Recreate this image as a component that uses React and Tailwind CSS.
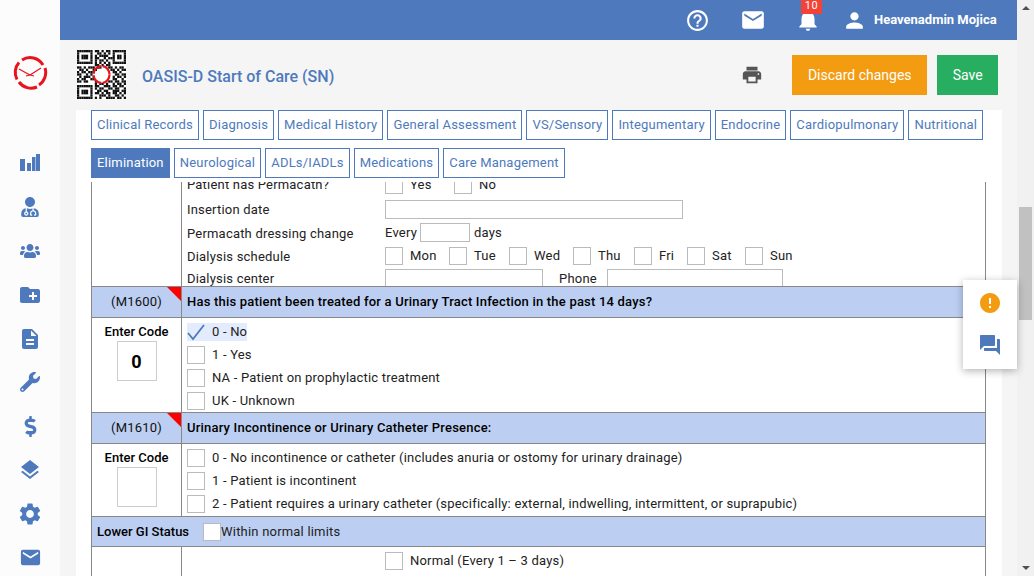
import React from "react";
import { MdHelpOutline, MdEmail, MdNotifications, MdPerson, MdPrint, MdError, MdQuestionAnswer, MdCreateNewFolder, MdDescription, MdLayers, MdSettings } from "react-icons/md";
import { FaUserMd, FaUsers, FaWrench, FaDollarSign } from "react-icons/fa";

const font = { fontFamily: "Roboto, sans-serif" };

function Logo() {
  return (
    <svg width="36" height="36" viewBox="0 0 36 36" fill="none" stroke="#e8141c">
      <path d="M5 24.5A15 15 0 0 1 7 7.5" strokeWidth="3" />
      <path d="M10 5A15 15 0 0 1 31 10" strokeWidth="3" />
      <path d="M33 13A15 15 0 0 1 27 30" strokeWidth="3" />
      <path d="M25 32A15 15 0 0 1 7 27" strokeWidth="3" />
      <path d="M7 14L18 20L29 13M14 21L18 20L22 21" strokeWidth="1.2" />
    </svg>
  );
}

function QR() {
  const rows = [
    "1111111011010110111111",
    "1000001001101010100001",
    "1011101010111100101101",
    "1011101011001011101101",
    "1000001010110100100001",
    "1111111010101010111111",
    "0000000011010110000000",
    "1101011101100011010110",
    "0110100110000001101011",
    "1011011100000000110100",
    "1100101000000000011011",
    "0101110100000000101101",
    "1011001100000000110010",
    "1101100010000011011011",
    "0000000010110100101101",
    "1111111011001110110110",
    "1000001010110011011001",
    "1011101001101100111011",
    "1011101011010110110101",
    "1000001000111010011010",
    "1111111010100111101101",
  ];
  return (
    <svg width="49" height="49" viewBox="0 0 22 21" preserveAspectRatio="none" className="shrink-0 bg-white">
      {rows.map((r, y) =>
        r.split("").map((c, x) => (c === "1" ? <rect key={x + "-" + y} x={x} y={y} width="1" height="1" fill="#111" /> : null))
      )}
      <circle cx="11" cy="10.5" r="3.6" fill="none" stroke="#e8141c" strokeWidth="1" strokeDasharray="5 0.8" />
    </svg>
  );
}

function Box({ className = "" }) {
  return <span className={"inline-block w-[18px] h-[18px] border border-[#bbbbbb] bg-white shrink-0 " + className} />;
}

function Input({ className = "" }) {
  return <span className={"block h-[19px] border border-[#bbbbbb] bg-white shrink-0 " + className} />;
}

function Tab({ children, active }) {
  return (
    <div className={"h-[30px] px-[5px] flex items-center border border-[#4e7abd] text-[13px] tracking-[0.2px] " + (active ? "bg-[#4e7abd] text-white" : "bg-white text-[#4e7abd]")}>
      {children}
    </div>
  );
}

function Day({ label, className }) {
  return (
    <div className={"flex items-center " + className}>
      <Box />
      <span className="ml-[7px]">{label}</span>
    </div>
  );
}

function Option({ label, checked }) {
  return (
    <div className="h-[23px] flex items-center">
      <div className={"flex items-center h-[18px] " + (checked ? "bg-[#e3ecfc]" : "")}>
        {checked ? (
          <svg width="18" height="18" viewBox="0 0 18 18" fill="none" stroke="#4e7abd" strokeWidth="1.8">
            <path d="M1 10L6 16L17 2" />
          </svg>
        ) : (
          <Box />
        )}
        <span className="ml-[7px] whitespace-nowrap pr-0">{label}</span>
      </div>
    </div>
  );
}

function Header({ code, title, children }) {
  return (
    <div className="flex h-[31px] bg-[#bccff2] border-b border-[#888888] text-black">
      <div className="relative w-[90px] shrink-0 border-r border-[#888888] flex items-center justify-center text-[#111]">
        {code}
        <span className="absolute top-0 right-0 w-0 h-0 border-l-[14px] border-l-transparent border-t-[14px] border-t-[#ff0000]" />
      </div>
      <div className="pl-[5px] flex items-center font-medium">{title}</div>
    </div>
  );
}

const navIcons = [
  <svg key="a" width="20" height="17" viewBox="0 0 20 17" fill="#4e7abd"><rect x="0" y="5" width="5" height="12" /><rect x="7" y="9" width="4" height="8" /><rect x="12" y="3" width="3.5" height="14" /><rect x="16" y="0" width="4" height="17" /></svg>,
  <FaUserMd key="b" size={20} />,
  <FaUsers key="c" size={20} />,
  <MdCreateNewFolder key="d" size={24} />,
  <MdDescription key="e" size={24} />,
  <FaWrench key="f" size={20} />,
  <FaDollarSign key="g" size={21} />,
  <MdLayers key="h" size={24} />,
  <MdSettings key="i" size={26} />,
  <MdEmail key="j" size={23} />,
];

export default function App() {
  return (
    <div className="relative flex h-[576px] w-[1034px] overflow-hidden bg-[#f5f5f5] text-[13px] text-[#222]" style={font}>
      {/* sidebar */}
      <aside className="w-[60px] shrink-0 bg-[#fcfcfc] flex flex-col items-center">
        <div className="mt-[55px] h-[36px]"><Logo /></div>
        <nav className="mt-[50px] flex flex-col items-center text-[#4e7abd]">
          {navIcons.map((ic, i) => (
            <div key={i} className="h-[43.9px] w-[30px] flex items-center justify-center">{ic}</div>
          ))}
        </nav>
      </aside>

      {/* main */}
      <div className="flex-1 min-w-0 flex flex-col">
        <header className="h-[40px] shrink-0 bg-[#4e7abd] flex items-center text-white">
          <MdHelpOutline size={25} className="ml-[625px]" />
          <MdEmail size={26} className="ml-[30px]" />
          <div className="relative ml-[29px]">
            <MdNotifications size={26} />
            <span className="absolute -top-[9px] left-[6px] w-[21px] h-[16px] bg-[#f44336] rounded-[1px] text-[11px] flex items-center justify-center tracking-[0.5px]">10</span>
          </div>
          <MdPerson size={25} className="ml-[21px]" />
          <span className="ml-[7px] font-bold text-[13px] whitespace-nowrap">Heavenadmin Mojica</span>
        </header>

        <div className="h-[70px] shrink-0 flex items-start pl-[17px]">
          <div className="mt-[10px]"><QR /></div>
          <div className="ml-[16px] mt-[25px] text-[16px] font-medium text-[#4e7abd] whitespace-nowrap">OASIS-D Start of Care (SN)</div>
          <MdPrint size={22} className="ml-[407px] mt-[24px] text-[#555]" />
          <div className="ml-[29px] mt-[15px] w-[135px] h-[40px] bg-[#f39c12] text-white text-[14px] flex items-center justify-center">Discard changes</div>
          <div className="ml-[10px] mt-[15px] w-[61px] h-[40px] bg-[#27ae60] text-white text-[14px] flex items-center justify-center">Save</div>
        </div>

        <div className="flex-1 min-h-0 ml-[16px] mr-[15px] bg-white pl-[15px] pr-[16px] flex flex-col">
          <div className="flex flex-wrap gap-[4px] shrink-0 pb-[4px]">
            {["Clinical Records", "Diagnosis", "Medical History", "General Assessment", "VS/Sensory", "Integumentary", "Endocrine", "Cardiopulmonary", "Nutritional"].map((t) => <Tab key={t}>{t}</Tab>)}
            <div className="basis-full h-0 -mt-[4px]" />
            {["Elimination", "Neurological", "ADLs/IADLs", "Medications", "Care Management"].map((t) => <Tab key={t} active={t === "Elimination"}>{t}</Tab>)}
          </div>

          <div className="flex-1 min-h-0 overflow-hidden border-x border-[#888888] tracking-[0.2px]">
            {/* dialysis block */}
            <div className="flex h-[105px] border-b border-[#888888]">
              <div className="w-[90px] shrink-0 border-r border-[#888888]" />
              <div className="relative flex-1 overflow-hidden pl-[5px]">
                <div className="-mt-[9px]">
                  <div className="flex h-[23px] items-center">
                    <div className="w-[198px]">Patient has Permacath?</div>
                    <Day label="Yes" className="w-[69px]" />
                    <Day label="No" />
                  </div>
                  <div className="flex h-[25px] items-center pt-[2px]">
                    <div className="w-[198px]">Insertion date</div>
                    <Input className="w-[298px]" />
                  </div>
                  <div className="flex h-[23px] items-center">
                    <div className="w-[198px] pt-[2px]">Permacath dressing change</div>
                    <span>Every</span>
                    <Input className="w-[50px] ml-[3px]" />
                    <span className="ml-[4px]">days</span>
                  </div>
                  <div className="flex h-[23px] items-center">
                    <div className="w-[198px] pt-[2px]">Dialysis schedule</div>
                    <Day label="Mon" className="w-[64px]" />
                    <Day label="Tue" className="w-[60px]" />
                    <Day label="Wed" className="w-[64px]" />
                    <Day label="Thu" className="w-[61px]" />
                    <Day label="Fri" className="w-[53px]" />
                    <Day label="Sat" className="w-[58px]" />
                    <Day label="Sun" />
                  </div>
                  <div className="flex h-[23px] items-center">
                    <div className="w-[198px]">Dialysis center</div>
                    <Input className="w-[158px]" />
                    <span className="ml-[16px]">Phone</span>
                    <Input className="w-[176px] ml-[10px]" />
                  </div>
                </div>
              </div>
            </div>

            <Header code="(M1600)" title="Has this patient been treated for a Urinary Tract Infection in the past 14 days?" />
            <div className="flex h-[95px] border-b border-[#888888]">
              <div className="w-[90px] shrink-0 border-r border-[#888888] flex flex-col items-center pt-[6px]">
                <div className="font-medium text-black leading-[16px] tracking-normal">Enter Code</div>
                <div className="mt-[1px] w-[40px] h-[40px] border border-[#cccccc] flex items-center justify-center text-[18px] font-bold text-black">0</div>
              </div>
              <div className="pl-[5px] pt-[2px]">
                <Option label="0 - No" checked />
                <Option label="1 - Yes" />
                <Option label="NA - Patient on prophylactic treatment" />
                <Option label="UK - Unknown" />
              </div>
            </div>

            <Header code="(M1610)" title="Urinary Incontinence or Urinary Catheter Presence:" />
            <div className="flex h-[73px] border-b border-[#888888]">
              <div className="w-[90px] shrink-0 border-r border-[#888888] flex flex-col items-center pt-[6px]">
                <div className="font-medium text-black leading-[16px] tracking-normal">Enter Code</div>
                <div className="mt-[1px] w-[40px] h-[40px] border border-[#cccccc]" />
              </div>
              <div className="pl-[5px] pt-[2px]">
                <Option label="0 - No incontinence or catheter (includes anuria or ostomy for urinary drainage)" />
                <Option label="1 - Patient is incontinent" />
                <Option label="2 - Patient requires a urinary catheter (specifically: external, indwelling, intermittent, or suprapubic)" />
              </div>
            </div>

            <div className="flex h-[30px] items-center bg-[#bccff2] border-b border-[#888888] pl-[5px] text-black">
              <span className="font-medium tracking-normal">Lower GI Status</span>
              <Box className="ml-[14px]" />
              <span className="text-[#222]">Within normal limits</span>
            </div>

            <div className="flex h-[60px]">
              <div className="w-[90px] shrink-0 border-r border-[#888888]" />
              <div className="pl-[203px] pt-[3px]">
                <div className="flex items-center h-[22px]">
                  <Box />
                  <span className="ml-[7px]">Normal (Every 1 – 3 days)</span>
                </div>
                <div className="flex items-center h-[22px] mt-[2px]">
                  <span>Last bowel movement</span>
                  <Input className="w-[95px] ml-[10px]" />
                </div>
              </div>
            </div>
          </div>
        </div>
      </div>

      {/* scrollbar */}
      <div className="w-[17px] shrink-0 bg-[#f1f1f1] flex flex-col items-center">
        <span className="mt-[6px] w-0 h-0 border-x-[4px] border-x-transparent border-b-[4px] border-b-[#505050]" />
        <div className="mt-[197px] w-[13px] h-[113px] bg-[#c1c1c1]" />
        <span className="mt-auto mb-[6px] w-0 h-0 border-x-[4px] border-x-transparent border-t-[4px] border-t-[#505050]" />
      </div>

      {/* floating actions */}
      <div className="absolute left-[963px] top-[280px] w-[54px] h-[89px] bg-white shadow-[0_2px_8px_rgba(0,0,0,0.3)] flex flex-col items-center">
        <MdError size={24} className="mt-[11px] text-[#f39c12]" />
        <MdQuestionAnswer size={24} className="mt-[18px] text-[#4e7abd]" />
      </div>
    </div>
  );
}
